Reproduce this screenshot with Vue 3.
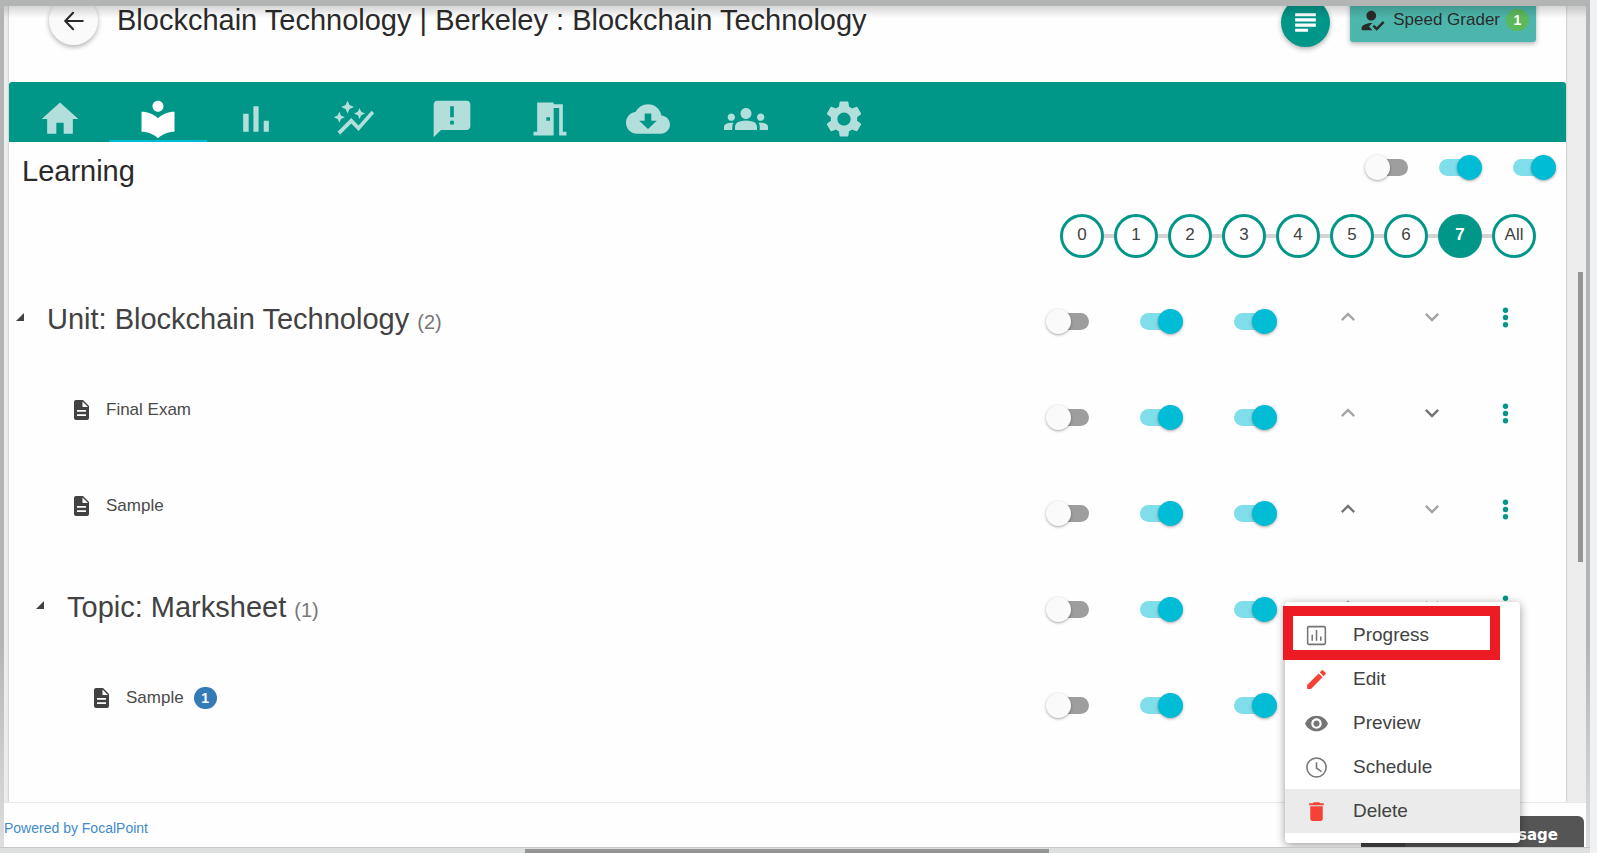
<template>
  <div class="screen">
    <div class="viewport">
      <div class="content">
        <main class="card">
          <header class="course-header">
            <button class="back-btn" aria-label="Back">
              <svg viewBox="0 0 24 24" width="22" height="22">
                <path d="M21.500 12H2.500M11 3L2.500 12l8.500 9" fill="none" stroke="currentColor" stroke-width="2.300" stroke-linecap="round" />
              </svg>
            </button>
            <h1>Blockchain Technology | Berkeley : Blockchain Technology</h1>
            <button class="notes-btn" aria-label="Notes">
              <svg viewBox="0 0 24 24" width="31" height="31">
                <path d="M14 16.800H4v2.400h10v-2.400zm6-8H4v2.400h16V8.800zM4 15.200h16v-2.400H4v2.400zM4 4.800v2.400h16V4.800H4z" />
              </svg>
            </button>
            <button class="grader-btn">
              <svg viewBox="0 0 24 24" width="29" height="29">
                <path d="M9 17l3-2.940c-.39-.04-.68-.06-1-.06-2.670 0-8 1.340-8 4v2h9l-3-3zm2-5c2.210 0 4-1.790 4-4s-1.790-4-4-4-4 1.790-4 4 1.790 4 4 4zM15.470 20.500L12 17l1.400-1.410 2.070 2.080 5.130-5.170 1.400 1.410z" />
              </svg>
              Speed Grader
              <span class="badge badge-green">1</span>
            </button>
          </header>

          <nav class="tabs">
            <button
              v-for="tab in tabs"
              :key="tab.name"
              class="tab"
              :class="{ active: tab.name === activeTab }"
              :aria-label="tab.name"
              @click="activeTab = tab.name"
            >
              <svg viewBox="0 0 24 24" width="44" height="44"><path :d="tab.icon" /></svg>
            </button>
          </nav>

          <div class="toolbar">
            <h2>Learning</h2>
            <div class="toolbar-switches">
              <input
                v-for="(label, i) in switchLabels"
                :key="label"
                v-model="allSwitches[i]"
                type="checkbox"
                class="switch"
                :aria-label="label + ' for all'"
              >
            </div>
          </div>

          <ol class="levels">
            <li v-for="level in levels" :key="level">
              <button :class="{ current: level === currentLevel }" @click="currentLevel = level">{{ level }}</button>
            </li>
          </ol>

          <ul class="tree">
            <li v-for="(row, index) in rows" :key="index" class="row">
              <div v-if="row.count" class="group-name" :class="{ nested: row.nested }">
                <svg class="caret" viewBox="0 0 8 8" width="8" height="8"><path d="M8 0v8H0z" /></svg>
                <h3>{{ row.name }} <small>({{ row.count }})</small></h3>
              </div>
              <div v-else class="item-name" :class="{ nested: row.nested }">
                <svg viewBox="0 0 15 20" width="15" height="20">
                  <path d="M2 0h7l6 6v12a2 2 0 0 1-2 2H2a2 2 0 0 1-2-2V2a2 2 0 0 1 2-2z" />
                  <path d="M8.500 1.500V7H14zM3 10h9v1.700H3zM3 14.300h9V16H3z" fill="#fff" />
                </svg>
                <span>{{ row.name }}</span>
                <span v-if="row.badge" class="badge badge-blue">{{ row.badge }}</span>
              </div>

              <div v-for="(label, i) in switchLabels" :key="label" class="cell cell-switch">
                <input v-model="row.switches[i]" type="checkbox" class="switch" :aria-label="label + ' ' + row.name">
              </div>
              <div class="cell cell-up">
                <button class="icon-btn" :class="{ enabled: row.canUp }" aria-label="Move up">
                  <svg viewBox="0 0 24 24" width="28" height="28"><path d="M12 8l-6 6 1.410 1.410L12 10.830l4.590 4.580L18 14z" /></svg>
                </button>
              </div>
              <div class="cell cell-down">
                <button class="icon-btn" :class="{ enabled: row.canDown }" aria-label="Move down">
                  <svg viewBox="0 0 24 24" width="28" height="28"><path d="M16.590 8.590L12 13.170 7.410 8.590 6 10l6 6 6-6z" /></svg>
                </button>
              </div>
              <div class="cell cell-more">
                <button class="icon-btn more" aria-label="More" @click="openMenu = openMenu === index ? null : index">
                  <svg viewBox="0 0 24 24" width="29" height="29">
                    <circle cx="12" cy="6" r="2.200" /><circle cx="12" cy="12" r="2.200" /><circle cx="12" cy="18" r="2.200" />
                  </svg>
                </button>
              </div>

              <div v-if="openMenu === index" class="menu">
                <button
                  v-for="action in actions"
                  :key="action.name"
                  class="menu-item"
                  :class="{ danger: action.red, hovered: action.name === 'Delete' }"
                >
                  <svg viewBox="0 0 24 24" width="25" height="25">
                    <path v-if="action.line" :d="action.icon" fill="none" stroke="currentColor" stroke-width="1.500" />
                    <path v-else :d="action.icon" />
                  </svg>
                  {{ action.name }}
                </button>
                <div class="highlight"></div>
              </div>
            </li>
          </ul>
        </main>
        <div class="gutter"><div class="thumb-y"></div></div>
      </div>

      <footer class="footer">
        <a href="#">Powered by FocalPoint</a>
        <button class="chat-tab">
          <span class="chat-icon"></span>
          <span class="chat-label">Leave a message</span>
        </button>
      </footer>
    </div>
    <div class="scroll-x"><div class="thumb-x"></div></div>
  </div>
</template>

<script setup>
import { ref } from 'vue'

const activeTab = ref('Learning')
const tabs = [
  { name: 'Home', icon: 'M10 20v-6h4v6h5v-8h3L12 3 2 12h3v8z' },
  { name: 'Learning', icon: 'M12 11.55C9.64 9.35 6.48 8 3 8v11c3.48 0 6.64 1.35 9 3.55 2.36-2.19 5.52-3.55 9-3.55V8c-3.48 0-6.64 1.35-9 3.55zM12 8c1.66 0 3-1.34 3-3s-1.34-3-3-3-3 1.34-3 3 1.34 3 3 3z' },
  { name: 'Reports', icon: 'M5 9.2h3V19H5V9.2zM10.6 5h2.8v14h-2.8V5zm5.6 8H19v6h-2.8v-6z' },
  { name: 'Insights', icon: 'M14.06 9.94 12 9l2.06-.94L15 6l.94 2.06L18 9l-2.06.94L15 12l-.94-2.06zM4 14l.94-2.06L7 11l-2.06-.94L4 8l-.94 2.06L1 11l2.06.94L4 14zm4.5-5 1.09-2.41L12 5.5 9.59 4.41 8.5 2 7.41 4.41 5 5.5l2.41 1.09L8.5 9zm-4 11.500 6-6.010 4 4L23 8.930l-1.410-1.410-7.090 7.970-4-4L3 19l1.500 1.500z' },
  { name: 'Announcements', icon: 'M20 2H4c-1.1 0-1.99.9-1.99 2L2 22l4-4h14c1.1 0 2-.9 2-2V4c0-1.1-.9-2-2-2zm-7 9h-2V5h2v6zm0 4h-2v-2h2v2z' },
  { name: 'Rooms', icon: 'M14 6v15H3v-2h2V3h9v1h5v15h2v2h-4V6h-3zm-4 5v2h2v-2h-2z' },
  { name: 'Downloads', icon: 'M19.35 10.04C18.67 6.59 15.64 4 12 4 9.11 4 6.6 5.64 5.35 8.04 2.34 8.36 0 10.91 0 14c0 3.31 2.69 6 6 6h13c2.76 0 5-2.24 5-5 0-2.64-2.05-4.78-4.65-4.96zM16.800 13L12 17.500 7.200 13h3V9h3.600v4z' },
  { name: 'People', icon: 'M12 12.75c1.63 0 3.07.39 4.24.9 1.08.48 1.76 1.56 1.76 2.73V18H6v-1.61c0-1.18.68-2.26 1.76-2.73 1.17-.52 2.61-.91 4.24-.91zM4 13c1.1 0 2-.9 2-2s-.9-2-2-2-2 .9-2 2 .9 2 2 2zm1.13 1.1c-.37-.06-.74-.1-1.13-.1-.99 0-1.93.21-2.78.58C.48 14.9 0 15.62 0 16.43V18h4.5v-1.61c0-.83.23-1.61.63-2.29zM20 13c1.1 0 2-.9 2-2s-.9-2-2-2-2 .9-2 2 .9 2 2 2zm4 3.43c0-.81-.48-1.53-1.22-1.85-.85-.37-1.79-.58-2.78-.58-.39 0-.76.04-1.13.1.4.68.63 1.46.63 2.29V18H24v-1.57zM12 6c1.66 0 3 1.34 3 3s-1.34 3-3 3-3-1.34-3-3 1.34-3 3-3z' },
  { name: 'Settings', icon: 'M19.14 12.94c.04-.3.06-.61.06-.94 0-.32-.02-.64-.07-.94l2.03-1.58c.18-.14.23-.41.12-.61l-1.92-3.32c-.12-.22-.37-.29-.59-.22l-2.39.96c-.5-.38-1.03-.7-1.62-.94l-.36-2.54c-.04-.24-.24-.41-.48-.41h-3.84c-.24 0-.43.17-.47.41l-.36 2.54c-.59.24-1.13.57-1.62.94l-2.39-.96c-.22-.08-.47 0-.59.22L2.74 8.87c-.12.21-.08.47.12.61l2.03 1.58c-.05.3-.09.63-.09.94s.02.64.07.94l-2.03 1.58c-.18.14-.23.41-.12.61l1.92 3.32c.12.22.37.29.59.22l2.39-.96c.5.38 1.03.7 1.62.94l.36 2.54c.05.24.24.41.48.41h3.84c.24 0 .44-.17.47-.41l.36-2.54c.59-.24 1.13-.56 1.62-.94l2.39.96c.22.08.47 0 .59-.22l1.92-3.32c.12-.22.07-.47-.12-.61l-2.01-1.58zM12 15.6c-1.98 0-3.6-1.62-3.6-3.6s1.62-3.6 3.6-3.6 3.6 1.62 3.6 3.6-1.62 3.6-3.6 3.6z' },
]

const switchLabels = ['Lock', 'Visible', 'Published']
const allSwitches = ref([false, true, true])

const levels = ['0', '1', '2', '3', '4', '5', '6', '7', 'All']
const currentLevel = ref('7')

const rows = ref([
  { name: 'Unit: Blockchain Technology', count: 2, switches: [false, true, true] },
  { name: 'Final Exam', switches: [false, true, true], canDown: true },
  { name: 'Sample', switches: [false, true, true], canUp: true },
  { name: 'Topic: Marksheet', count: 1, nested: true, switches: [false, true, true] },
  { name: 'Sample', badge: 1, nested: true, switches: [false, true, true] },
])

// index of the row whose menu is open
const openMenu = ref(3)
const actions = [
  { name: 'Progress', line: true, icon: 'M4.500 3.500h15a1 1 0 0 1 1 1v15a1 1 0 0 1-1 1h-15a1 1 0 0 1-1-1v-15a1 1 0 0 1 1-1zM7.900 17v-5.800M12 17V6.800M16.100 17v-4' },
  { name: 'Edit', red: true, icon: 'M3 17.25V21h3.75L17.81 9.94l-3.75-3.75L3 17.25zM20.71 7.04c.39-.39.39-1.02 0-1.41l-2.34-2.34c-.39-.39-1.02-.39-1.41 0l-1.83 1.83 3.75 3.75 1.83-1.83z' },
  { name: 'Preview', icon: 'M12 4.5C7 4.5 2.73 7.61 1 12c1.73 4.39 6 7.5 11 7.5s9.27-3.11 11-7.5c-1.73-4.39-6-7.5-11-7.5zM12 17c-2.76 0-5-2.24-5-5s2.24-5 5-5 5 2.24 5 5-2.24 5-5 5zm0-8c-1.66 0-3 1.34-3 3s1.34 3 3 3 3-1.34 3-3-1.34-3-3-3z' },
  { name: 'Schedule', line: true, icon: 'M12 2.800a9.200 9.200 0 1 1 0 18.400a9.200 9.200 0 1 1 0-18.400zM12 7v5.500l4.800 3.500' },
  { name: 'Delete', red: true, icon: 'M6 19c0 1.1.9 2 2 2h8c1.1 0 2-.9 2-2V7H6v12zM19 4h-3.5l-1-1h-5l-1 1H5v2h14V4z' },
]
</script>

<style>
body {
  margin: 0;
}
</style>

<style scoped>
.screen {
  display: flex;
  flex-direction: column;
  box-sizing: border-box;
  min-height: 100vh;
  padding: 6px 4px 0 4px;
  border-right: 7px solid #f0f1f4;
  background: linear-gradient(#b3b5b4 75%, #dedfdf);
  font-family: "Liberation Sans", Arial, sans-serif;
  font-size: 17px;
  color: #2a2a2a;
}

button {
  padding: 0;
  border: none;
  background: none;
  font-family: inherit;
  font-size: inherit;
  color: inherit;
  cursor: pointer;
}

svg {
  display: block;
  flex: none;
  fill: currentColor;
}

h1, h2, h3 {
  margin: 0;
  font-size: 29px;
  font-weight: normal;
  white-space: nowrap;
}

ul, ol {
  margin: 0;
  padding: 0;
  list-style: none;
}

.viewport {
  position: relative;
  flex: 1;
  display: flex;
  flex-direction: column;
  overflow: hidden;
  background: #ededed;
}

.viewport::before {
  content: "";
  position: absolute;
  z-index: 3;
  top: 0;
  left: 0;
  right: 0;
  height: 12px;
  background: linear-gradient(rgba(0, 0, 0, 0.16), rgba(0, 0, 0, 0));
  pointer-events: none;
}

.content {
  flex: 1;
  display: flex;
  padding-left: 5px;
}

.card {
  flex: 1;
  background: #fefefe;
  box-shadow: 0 0 2px rgba(0, 0, 0, 0.3);
}

/* header is scrolled partly out of view */
.course-header {
  display: flex;
  align-items: flex-start;
  height: 86px;
  margin-top: -10px;
  padding: 0 30px 0 40px;
}

.course-header h1 {
  flex: 1;
  padding-left: 19px;
  line-height: 48px;
}

.back-btn, .notes-btn {
  display: flex;
  align-items: center;
  justify-content: center;
  width: 49px;
  height: 49px;
  border-radius: 50%;
  box-shadow: 0 2px 5px rgba(0, 0, 0, 0.3);
}

.back-btn {
  background: #fafafa;
}

.notes-btn {
  margin: 2px 20px 0 0;
  background: #009688;
  color: #fff;
}

.grader-btn {
  display: flex;
  align-items: center;
  gap: 6px;
  height: 46px;
  padding: 2px 7px 0 8px;
  border-radius: 3px;
  background: #4db6ac;
  box-shadow: 0 2px 5px rgba(0, 0, 0, 0.3);
}

.badge {
  min-width: 23px;
  border-radius: 11px;
  color: #fff;
  font-size: 14px;
  font-weight: bold;
  line-height: 22px;
  text-align: center;
}

.badge-green {
  background: #5cb85c;
}

.badge-blue {
  background: #337ab7;
}

.tabs {
  display: flex;
  height: 60px;
  padding-left: 2px;
  border-radius: 3px 3px 0 0;
  background: #009688;
}

.tab {
  display: flex;
  justify-content: center;
  box-sizing: border-box;
  width: 98px;
  padding-top: 15px;
  border-bottom: 2px solid transparent;
  color: #b2dfdb;
}

.tab.active {
  border-bottom-color: #00bcd4;
  color: #fff;
}

.toolbar {
  display: flex;
  align-items: center;
  justify-content: space-between;
  height: 50px;
  padding: 0 10px 4px 13px;
}

.toolbar h2 {
  padding-top: 8px;
}

.toolbar-switches {
  display: flex;
  gap: 31px;
}

.switch {
  appearance: none;
  position: relative;
  width: 43px;
  height: 25px;
  margin: 0;
  cursor: pointer;
}

.switch::before {
  content: "";
  position: absolute;
  top: 4px;
  left: 4px;
  right: 0;
  height: 17px;
  border-radius: 9px;
  background: #9e9e9e;
}

.switch::after {
  content: "";
  position: absolute;
  top: 0;
  left: 0;
  width: 25px;
  height: 25px;
  border-radius: 50%;
  background: #fafafa;
  box-shadow: 0 1px 3px rgba(0, 0, 0, 0.35);
}

.switch:checked::before {
  left: 0;
  right: 4px;
  background: #80deea;
}

.switch:checked::after {
  left: 18px;
  background: #00bcd4;
}

.levels {
  display: flex;
  justify-content: flex-end;
  padding: 18px 30px 11px;
}

.levels li {
  display: flex;
  align-items: center;
}

.levels li + li::before {
  content: "";
  width: 10px;
  height: 4px;
  background: #d3d3d3;
}

.levels button {
  box-sizing: border-box;
  width: 44px;
  height: 44px;
  padding-bottom: 2px;
  border: 3px solid #009688;
  border-radius: 50%;
  color: #424242;
}

.levels .current {
  background: #009688;
  color: #fff;
  font-weight: bold;
}

.row {
  position: relative;
  display: flex;
  align-items: center;
  height: 96px;
  padding: 0 25px 0 7px;
  color: #424242;
}

.group-name, .item-name {
  flex: 1;
  display: flex;
  align-items: center;
}

.group-name {
  gap: 23px;
}

.group-name h3 {
  padding-top: 4px;
}

.group-name.nested {
  padding-left: 20px;
}

.group-name small {
  font-size: 20px;
  color: #777;
}

.item-name {
  padding: 0 0 6px 58px;
  color: #4a4a4a;
}

.item-name svg {
  margin-right: 17px;
  color: #424242;
}

.item-name.nested {
  padding-left: 78px;
}

.item-name .badge {
  margin-left: 10px;
}

.cell {
  display: flex;
  justify-content: center;
}

.cell-switch {
  width: 94px;
  padding-top: 8px;
}

.cell-up {
  width: 92px;
}

.cell-down {
  width: 75px;
}

.cell-more {
  width: 72px;
}

.icon-btn {
  color: #a5a5a5;
}

.icon-btn.enabled {
  color: #757575;
}

.icon-btn.more {
  color: #009688;
}

.menu {
  position: absolute;
  z-index: 2;
  top: 45px;
  right: 46px;
  width: 235px;
  padding: 11px 0 10px;
  border-radius: 4px;
  background: #fff;
  box-shadow: 0 2px 10px rgba(0, 0, 0, 0.4);
}

.menu-item {
  display: flex;
  align-items: center;
  gap: 24px;
  width: 100%;
  height: 44px;
  padding-left: 19px;
  font-size: 19px;
}

.menu-item svg {
  color: #757575;
}

.menu-item.danger svg {
  color: #f44336;
}

.menu-item.hovered {
  background: #ebebeb;
}

.highlight {
  position: absolute;
  top: 4px;
  left: -2px;
  right: 20px;
  height: 34px;
  border: 10px solid #ed1c24;
  pointer-events: none;
}

.gutter {
  width: 20px;
}

.thumb-y {
  width: 5px;
  height: 290px;
  margin: 266px 0 0 12px;
  background: #959595;
}

.footer {
  display: flex;
  align-items: center;
  justify-content: space-between;
  height: 44px;
  border-top: 1px solid #e8e8e8;
  background: #fefefe;
}

.footer a {
  padding-top: 5px;
  font-size: 14px;
  color: #428bca;
  text-decoration: none;
}

.chat-tab {
  display: flex;
  align-items: center;
  align-self: flex-end;
  gap: 8px;
  height: 31px;
  margin-right: 2px;
  padding-right: 26px;
  border-radius: 6px 6px 0 0;
  background: #555;
  color: #fff;
  font-family: "DejaVu Sans", Verdana, sans-serif;
  font-size: 15px;
  font-weight: bold;
}

.chat-icon {
  width: 44px;
  height: 31px;
  border-radius: 6px 0 0 0;
  background: #444;
}

.chat-label {
  padding-top: 7px;
}

.scroll-x {
  height: 4px;
  margin: 0 -4px;
  padding-top: 1px;
  border-top: 1px solid #c6c8c8;
  background: #dedfdf;
}

.thumb-x {
  width: 33%;
  height: 4px;
  margin: 0 auto 0 33%;
  background: #959595;
}
</style>
